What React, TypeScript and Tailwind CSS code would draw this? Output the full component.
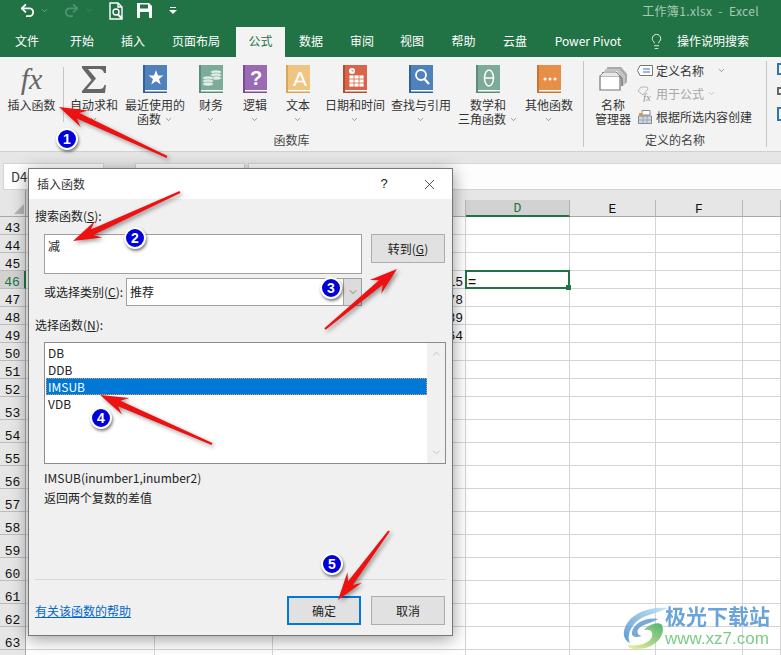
import { ChevronDown, ChevronUp, Lightbulb, Redo2, Undo2, X } from "lucide-react";
import type { ReactNode } from "react";

const tabs = [
  { label: "文件", w: "w-[54px]" },
  { label: "开始", w: "w-[56px]" },
  { label: "插入", w: "w-[46px]" },
  { label: "页面布局", w: "w-[80px]" },
  { label: "公式", w: "w-[49px]", active: true },
  { label: "数据", w: "w-[52px]" },
  { label: "审阅", w: "w-[50px]" },
  { label: "视图", w: "w-[50px]" },
  { label: "帮助", w: "w-[53px]" },
  { label: "云盘", w: "w-[50px]" },
  { label: "Power Pivot", w: "w-[96px]" },
];

const Chevron = ({ className = "" }: { className?: string }) => (
  <ChevronDown size={9} strokeWidth={1.5} className={`text-[#555] ${className}`} />
);

// book shaped ribbon icon, the glyph goes in as children
const Book = ({ color, spine, children }: { color: string; spine: string; children?: ReactNode }) => (
  <svg width="24" height="28" viewBox="0 0 24 28">
    <rect x="0" y="0" width="24" height="26" fill={color} />
    <rect x="0" y="0" width="2" height="28" fill={spine} />
    <rect x="2" y="25" width="22" height="1.5" fill="#fff" />
    <rect x="2" y="26.5" width="22" height="1.5" fill={spine} />
    {children}
  </svg>
);

const RibbonButton = ({
  w,
  icon,
  lines,
  chevron,
  inline,
}: {
  w: string;
  icon: ReactNode;
  lines: string[];
  chevron?: boolean;
  inline?: boolean;
}) => (
  <div className={`${w} h-[76px] flex flex-col items-center pt-[8px] shrink-0`}>
    <div className="h-[28px] flex items-center justify-center">{icon}</div>
    <div className="mt-[5px] text-[12px] leading-[14px] text-[#333] whitespace-nowrap text-center">
      {lines.map((line, i) => (
        <div key={line} className="h-[14px] flex items-center justify-center gap-[3px]">
          {line}
          {inline && i === lines.length - 1 && <Chevron />}
        </div>
      ))}
      {chevron && (
        <div className="h-[14px] flex items-center justify-center">
          <Chevron />
        </div>
      )}
    </div>
  </div>
);

const Sep = ({ className = "" }: { className?: string }) => <div className={`w-px bg-[#c6c6c6] shrink-0 ${className}`} />;

const Ribbon = () => (
  <div className="h-[95px] bg-[#f3f3f3] border-b border-[#d0d0d0] flex relative overflow-hidden">
    <div className="w-[583px] shrink-0 flex flex-col">
      <div className="flex h-[76px]">
        <RibbonButton
          w="w-[63px]"
          lines={["插入函数"]}
          icon={<span className="font-['Liberation_Serif',serif] italic text-[30px] leading-[28px] text-[#666]">fx</span>}
        />
        <Sep className="h-[55px] mt-[10px]" />
        <RibbonButton
          w="w-[60px]"
          lines={["自动求和"]}
          chevron
          icon={
            <svg width="24" height="27" viewBox="0 0 24 27">
              <path d="M0 0H24V7H22C21 4 20 3 17 3H6L14 12.5L5 23H18C20 23 21.500 22 22.500 19H24L23 27H0V25L9.500 14L0 2Z" fill="#666" />
            </svg>
          }
        />
        <RibbonButton
          w="w-[62px]"
          lines={["最近使用的", "函数"]}
          inline
          icon={
            <Book color="#4f81bd" spine="#2e6299">
              <path d="M13 5L15 10.500H20.500L16 14L17.800 19.500L13 16.200L8.200 19.500L10 14L5.500 10.500H11Z" fill="#fff" />
            </Book>
          }
        />
        <RibbonButton
          w="w-[50px]"
          lines={["财务"]}
          chevron
          icon={
            <Book color="#7dab9a" spine="#5c8c7a">
              <g fill="#dfeee8" stroke="#7dab9a" strokeWidth="0.6">
                <ellipse cx="17" cy="7" rx="5.500" ry="2" />
                <ellipse cx="17" cy="10" rx="5.500" ry="2" />
                <ellipse cx="17" cy="13" rx="5.500" ry="2" />
                <ellipse cx="9" cy="13" rx="5.500" ry="2" />
                <ellipse cx="9" cy="16" rx="5.500" ry="2" />
                <ellipse cx="9" cy="19" rx="5.500" ry="2" />
              </g>
            </Book>
          }
        />
        <RibbonButton
          w="w-[38px]"
          lines={["逻辑"]}
          chevron
          icon={
            <Book color="#9a6ab5" spine="#7b4a98">
              <text x="13" y="20" textAnchor="middle" fontSize="20" fontWeight="700" fill="#fff" fontFamily="Liberation Sans">?</text>
            </Book>
          }
        />
        <RibbonButton
          w="w-[48px]"
          lines={["文本"]}
          chevron
          icon={
            <Book color="#f0c582" spine="#d8a658">
              <text x="14" y="21" textAnchor="middle" fontSize="21" fill="#fff" fontFamily="Liberation Sans">A</text>
            </Book>
          }
        />
        <RibbonButton
          w="w-[66px]"
          lines={["日期和时间"]}
          chevron
          icon={
            <Book color="#d7654a" spine="#b84a30">
              <circle cx="9" cy="6" r="3" fill="#fff" />
              <path d="M9 4.500V6H10.500" stroke="#d7654a" strokeWidth="0.8" fill="none" />
              <path d="M6 10H21V22H6ZM11 10V22M16 10V22M6 14H21M6 18H21" fill="#fff" stroke="#d7654a" strokeWidth="0.8" />
            </Book>
          }
        />
        <RibbonButton
          w="w-[66px]"
          lines={["查找与引用"]}
          chevron
          icon={
            <Book color="#4f81bd" spine="#2e6299">
              <circle cx="12" cy="10" r="5" fill="none" stroke="#fff" strokeWidth="1.800" />
              <path d="M15.500 14L20 19" stroke="#fff" strokeWidth="2.200" />
            </Book>
          }
        />
        <RibbonButton
          w="w-[68px]"
          lines={["数学和", "三角函数"]}
          inline
          icon={
            <Book color="#7dab9a" spine="#5c8c7a">
              <ellipse cx="13" cy="13" rx="4.500" ry="8" fill="none" stroke="#fff" strokeWidth="1.500" />
              <path d="M8.500 13H17.500" stroke="#fff" strokeWidth="1.500" />
            </Book>
          }
        />
        <RibbonButton
          w="w-[54px]"
          lines={["其他函数"]}
          chevron
          icon={
            <Book color="#e88f47" spine="#cc7330">
              <circle cx="8" cy="14" r="1.500" fill="#fff" />
              <circle cx="13" cy="14" r="1.500" fill="#fff" />
              <circle cx="18" cy="14" r="1.500" fill="#fff" />
            </Book>
          }
        />
      </div>
      <div className="text-[12px] leading-[15px] -mt-[1px] text-[#444] text-center">函数库</div>
    </div>
    <Sep className="h-[86px] mt-[4px]" />
    <div className="w-[182px] shrink-0 flex flex-col">
      <div className="flex h-[76px]">
        <RibbonButton
          w="w-[58px]"
          lines={["名称", "管理器"]}
          icon={
            <svg width="28" height="24" viewBox="0 0 28 24">
              <path d="M8 0H22L28 7V15L26 17V9L20 2H8Z" fill="#aaa" />
              <path d="M6 2H20L26 9V17L24 19V11L18 4H6Z" fill="#c4c4c4" />
              <path d="M3 5H18L24 11V19H22V12L17 7H3Z" fill="#8e8e8e" />
              <path d="M1 9H21V23H1Z" fill="#fff" stroke="#777" strokeWidth="1.200" />
              <path d="M1 9L5 5H17L21 9" fill="#e8e8e8" stroke="#888" />
            </svg>
          }
        />
        <div className="flex flex-col -ml-[5px] pt-[2px] text-[12px] leading-[15px] text-[#333]">
          <div className="h-[23px] flex items-center">
            <svg width="16" height="11" viewBox="0 0 16 11" className="mr-[3px]">
              <path d="M3 .5H15.500V10.500H3L.5 5.500Z" fill="#fff" stroke="#777" />
              <path d="M6 4H13M6 7H13" stroke="#2e75b6" />
            </svg>
            定义名称
            <Chevron className="ml-[13px]" />
          </div>
          <div className="h-[23px] flex items-center text-[#a6a6a6]">
            <svg width="16" height="16" viewBox="0 0 16 16" className="mr-[3px]">
              <path d="M1 5L4 1H10L11 3L6 9Z" fill="none" stroke="#b5b5b5" />
              <text x="6" y="15" fontSize="11" fontStyle="italic" fill="#999" fontFamily="Liberation Serif">fx</text>
            </svg>
            用于公式
            <Chevron className="ml-[3px] opacity-50" />
          </div>
          <div className="h-[23px] flex items-center">
            <svg width="14" height="14" viewBox="0 0 14 14" className="mr-[4px] ml-[1px]">
              <path d="M.5 6H13.500V13.500H.5Z" fill="#c9d8e8" stroke="#8a8a8a" />
              <path d="M5 6V13.500M9 6V13.500M.5 10H13.500" stroke="#8a8a8a" strokeWidth="0.6" />
              <path d="M4 .5H12V5H4Z" fill="#fff" stroke="#888" />
              <path d="M1 3H4V6H1Z" fill="#e0923f" />
            </svg>
            根据所选内容创建
          </div>
        </div>
      </div>
      <div className="text-[12px] leading-[15px] -mt-[1px] text-[#444] text-center">定义的名称</div>
    </div>
    <Sep className="h-[86px] mt-[4px]" />
    <div className="pl-[10px] pt-[6px] flex flex-col gap-[12px]">
      <div className="w-[6px] h-[12px] border-2 border-[#2e75b6]" />
      <div className="w-[6px] h-[8px] border-2 border-[#666]" />
      <div className="w-[6px] h-[14px] border-2 border-[#2e75b6]" />
    </div>
  </div>
);

const FormulaBar = () => (
  <div className="h-[38px] bg-[#e6e6e6] flex gap-[3px] pt-[11px] pl-[3px]">
    <div className="w-[101px] h-[27px] bg-white border border-[#d4d4d4] mr-[28px] pl-[7px] text-[13px] leading-[25px] text-[#333]">D46</div>
    <div className="w-[110px] h-[27px] bg-white border border-[#d4d4d4]" />
    <div className="flex-1 h-[27px] bg-[#fdfdfd] border-y border-l border-[#d4d4d4]" />
  </div>
);

// G is off the visible part of its column in the reference, so it has no letter
const columns = ["A", "B", "C", "D", "E", "F", ""];
const rows = Array.from({ length: 22 }, (_, i) => 43 + i);
const values: Record<number, string> = { 46: "115", 47: "178", 48: "189", 49: "164" };

const Sheet = () => (
  <div className="grid grid-cols-[26px_129px_118px_193px_104px_86px_87px_38px] font-['Liberation_Mono',monospace] text-[13px] leading-[11px] text-[#111]">
    <div className="h-[27px] flex items-end bg-[#e6e6e6] border-b border-r border-[#a8a8a8]">
      <div className="ml-[14px] mb-[2px] w-0 h-0 border-l-[10px] border-l-transparent border-b-[10px] border-b-[#b4b4b4]" />
    </div>
    {columns.map((c, i) => (
      <div key={i} className="h-[27px] pt-[10px] bg-[#e6e6e6]">
        <div
          className={`h-[17px] pt-[2px] flex items-center justify-center border-r ${
            c === "D" ? "bg-[#d2d2d2] text-[#217346] border-b-2 border-b-[#217346] border-r-[#b0b0b0]" : "border-b border-b-[#a8a8a8] border-r-[#b8b8b8]"
          }`}
        >
          {c}
        </div>
      </div>
    ))}
    {rows.map((r) => {
      const h = r <= 52 ? "h-[18px]" : "h-[23px]";
      return (
        <div key={r} className="contents">
          <div
            className={`${h} flex items-end justify-center border-b border-b-[#bcbcbc] ${
              r === 46 ? "bg-[#d2d2d2] text-[#217346] border-r-2 border-r-[#217346]" : "bg-[#e6e6e6] border-r border-r-[#a8a8a8]"
            }`}
          >
            {r < 64 ? r : ""}
          </div>
          {columns.map((c, i) => (
            <div key={i} className={`${h} relative border-r border-b border-[#d4d4d4] bg-white flex items-end ${c === "D" && r === 46 ? "z-10" : ""}`}>
              {c === "C" && values[r] && <span className="ml-auto pr-[2px]">{values[r]}</span>}
              {c === "D" && r === 46 && (
                <>
                  <span className="pl-[2px] font-['Liberation_Sans',sans-serif] text-[14px]">=</span>
                  <div className="absolute -left-[1px] -top-[1px] -right-[1px] -bottom-[1px] border-2 border-[#217346]" />
                  <div className="absolute -right-[2px] -bottom-[2px] w-[5px] h-[5px] bg-[#217346]" />
                </>
              )}
            </div>
          ))}
        </div>
      );
    })}
  </div>
);

const Key = ({ k }: { k: string }) => (
  <>
    (<span className="underline">{k}</span>):
  </>
);

const DlgButton = ({ children, primary }: { children: ReactNode; primary?: boolean }) => (
  <div
    className={`w-[74px] h-[29px] flex items-center justify-center bg-[#e1e1e1] text-[12px] text-[#222] ${
      primary ? "border-2 border-[#0078d7]" : "border border-[#adadad]"
    }`}
  >
    {children}
  </div>
);

const Dialog = () => (
  <div className="absolute z-20 left-[28px] top-[168px] w-[425px] h-[468px] border border-[#777] bg-[#f0f0f0] shadow-[0_3px_16px_rgba(0,0,0,0.4)] flex flex-col text-[12px] leading-[16px] text-[#222]">
    <div className="h-[30px] bg-white shrink-0 flex items-center pl-[8px]">
      <span className="text-[#333]">插入函数</span>
      <span className="ml-auto text-[13px] font-['Liberation_Sans',sans-serif] w-[14px] text-center mr-[30px]">?</span>
      <X size={17} strokeWidth={1.1} className="mr-[14px] text-[#222]" />
    </div>
    <div className="flex-1 flex flex-col pl-[6px] pr-[6px] pt-[9px]">
      <div>
        搜索函数
        <Key k="S" />
      </div>
      <div className="flex mt-[10px] ml-[9px] gap-[9px]">
        <div className="w-[318px] h-[40px] bg-white border border-[#a0a0a0] pl-[3px] pt-[3px]">减</div>
        <DlgButton>
          转到(<span className="underline">G</span>)
        </DlgButton>
      </div>
      <div className="flex items-center mt-[4px] ml-[9px]">
        <div className="w-[82px] whitespace-nowrap">
          或选择类别
          <Key k="C" />
        </div>
        <div className="w-[236px] h-[28px] flex bg-white border border-[#a0a0a0]">
          <span className="pl-[3px] leading-[26px] flex-1">推荐</span>
          <div className="w-[18px] bg-[#dcdcdc] border-l border-[#a0a0a0] flex items-center justify-center">
            <ChevronDown size={12} strokeWidth={1.2} className="text-[#444]" />
          </div>
        </div>
      </div>
      <div className="mt-[11px]">
        选择函数
        <Key k="N" />
      </div>
      <div className="ml-[9px] mt-[9px] w-[402px] h-[122px] shrink-0 bg-white border border-[#8c8c8c] flex pt-[1px] pl-[1px]">
        <div className="flex-1 leading-[17px]">
          <div className="h-[17px] pl-[2px]">DB</div>
          <div className="h-[17px] pl-[2px]">DDB</div>
          <div className="h-[17px] pl-[2px] bg-[#0078d7] text-white outline-1 outline-dotted -outline-offset-1 outline-[#d9a050]">IMSUB</div>
          <div className="h-[17px] pl-[2px]">VDB</div>
        </div>
        <div className="w-[18px] -mt-[1px] bg-[#f0f0f0] flex flex-col items-center justify-between py-[5px]">
          <ChevronUp size={11} strokeWidth={2} className="text-[#bcbcbc]" />
          <ChevronDown size={11} strokeWidth={2} className="text-[#bcbcbc]" />
        </div>
      </div>
      <div className="ml-[9px] mt-[6px]">IMSUB(inumber1,inumber2)</div>
      <div className="ml-[9px] mt-[4px]">返回两个复数的差值</div>
      <div className="flex-1" />
      <div className="border-t border-[#d9d9d9] pt-[16px] pb-[10px] flex items-center">
        <span className="text-[#0066cc] underline">有关该函数的帮助</span>
        <div className="ml-auto flex gap-[10px] mr-[1px]">
          <DlgButton primary>确定</DlgButton>
          <DlgButton>取消</DlgButton>
        </div>
      </div>
    </div>
  </div>
);

// red callout arrow as a polygon from tip to tail
const arrowPoints = (tx: number, ty: number, ex: number, ey: number) => {
  const len = Math.hypot(ex - tx, ey - ty);
  const ux = (ex - tx) / len;
  const uy = (ey - ty) / len;
  const at = (d: number, s: number) => `${tx + ux * d - uy * s},${ty + uy * d + ux * s}`;
  return [at(0, 0), at(28, 9), at(21, 3), at(len, 1), at(len, -1), at(21, -3), at(28, -9)].join(" ");
};

const arrows = [
  [59, 107, 167, 157],
  [73, 241, 180, 192],
  [397, 269, 325, 329],
  [100, 395, 212, 444],
  [338, 600, 389, 531],
];

const badges = [
  { n: 1, x: "left-[56px]", y: "top-[128px]" },
  { n: 2, x: "left-[124px]", y: "top-[227px]" },
  { n: 3, x: "left-[320px]", y: "top-[277px]" },
  { n: 4, x: "left-[90px]", y: "top-[407px]" },
  { n: 5, x: "left-[321px]", y: "top-[553px]" },
];

const Watermark = () => (
  <div className="absolute z-20 left-[622px] top-[605px] flex gap-[1px] opacity-90">
    <svg width="46" height="46" viewBox="0 0 46 46">
      <defs>
        <linearGradient id="wmBlue" x1="1" y1="0" x2="0" y2="1">
          <stop offset="0" stopColor="#bfe4f5" />
          <stop offset="1" stopColor="#4f8fd0" />
        </linearGradient>
        <linearGradient id="wmGreen" x1="1" y1="0" x2="0" y2="1">
          <stop offset="0" stopColor="#3fae62" />
          <stop offset="1" stopColor="#f0ee90" />
        </linearGradient>
      </defs>
      <path d="M46 3C28 1 6 8 2 26C1 32 4 36 8 38C4 30 10 16 24 11C32 8 40 6 46 3Z" fill="url(#wmBlue)" />
      <path d="M36 14C24 12 12 18 10 27C9 32 14 33 20 31C14 30 14 24 20 21C26 18 32 17 36 14Z" fill="#6f9fd0" />
      <path d="M40 20C44 30 34 44 14 44C8 44 6 42 6 40C20 42 32 36 30 28C30 25 26 24 22 25C26 20 36 16 40 20Z" fill="url(#wmGreen)" />
    </svg>
    <div className="font-['Liberation_Sans','Noto_Sans_CJK_SC',sans-serif] -ml-[4px]">
      <div className="text-[21px] leading-[24px] font-bold text-[#5b9bd5] whitespace-nowrap">极光下载站</div>
      <div className="text-[17px] leading-[20px] text-[#6cc77a] whitespace-nowrap">www.xz7.com</div>
    </div>
  </div>
);

const Overlays = () => (
  <>
    <svg className="absolute z-30 left-0 top-0 drop-shadow-[2px_2px_2px_rgba(0,0,0,0.4)]" width="781" height="655">
      {arrows.map(([a, b, c, d]) => (
        <polygon key={a} points={arrowPoints(a, b, c, d)} fill="#ee1111" />
      ))}
    </svg>
    {badges.map((b) => (
      <div
        key={b.n}
        className={`absolute z-30 ${b.x} ${b.y} w-[22px] h-[22px] rounded-full bg-[#0000dd] border-[2px] border-white shadow-[1px_2px_3px_rgba(0,0,0,0.5)] flex items-center justify-center text-white text-[14px] font-bold font-['Liberation_Sans',sans-serif]`}
      >
        {b.n}
      </div>
    ))}
  </>
);

export default function App() {
  return (
    <div className="relative w-[781px] h-[655px] overflow-hidden bg-white font-['Noto_Sans_CJK_SC','Liberation_Sans',sans-serif]">
      <div className="bg-[#217346] h-[57px] text-white text-[12px] flex flex-col">
        <div className="h-[27px] pb-[6px] flex items-center shrink-0">
          <Undo2 size={17} strokeWidth={2.6} className="ml-[19px]" />
          <Chevron className="ml-[4px] !text-[#a8c8b6]" />
          <Redo2 size={17} strokeWidth={2.6} className="ml-[14px] text-[#4d9470]" />
          <Chevron className="ml-[5px] !text-[#4d9470]" />
          <svg width="16" height="18" viewBox="0 0 16 18" fill="none" stroke="#fff" strokeWidth="1.400" className="ml-[14px]">
            <path d="M10 1H2V17H14V5Z" />
            <path d="M10 1V5H14" />
            <circle cx="8" cy="10" r="3" />
            <path d="M10 12.500L14 16.500" strokeWidth="2" />
          </svg>
          <svg width="15" height="15" viewBox="0 0 15 15" className="ml-[13px]">
            <path d="M0 0H12L15 3V15H0Z" fill="#fff" />
            <path d="M3 1.500H11V5.500H3Z" fill="#217346" />
            <path d="M3 9H12V15H3Z" fill="#217346" />
          </svg>
          <svg width="8" height="7" viewBox="0 0 8 7" fill="#fff" className="ml-[17px]">
            <path d="M1 0H7V1H1ZM0 3H8L4 7Z" />
          </svg>
          <span className="ml-auto mr-[22px] text-[#a8c9b5] whitespace-pre tracking-[0.35px]">工作簿1.xlsx  -  Excel</span>
        </div>
        <div className="h-[30px] flex items-stretch">
          {tabs.map((t) => (
            <div
              key={t.label}
              className={`${t.w} flex items-center justify-center pb-[2px] shrink-0 whitespace-nowrap ${t.active ? "bg-[#f3f3f3] text-[#217346]" : ""}`}
            >
              {t.label}
            </div>
          ))}
          <div className="w-[41px] pb-[2px] flex items-center justify-center">
            <Lightbulb size={17} strokeWidth={1.2} />
          </div>
          <div className="flex items-center pb-[2px] whitespace-nowrap">操作说明搜索</div>
        </div>
      </div>
      <Ribbon />
      <FormulaBar />
      <Sheet />
      <Dialog />
      <Watermark />
      <Overlays />
    </div>
  );
}
